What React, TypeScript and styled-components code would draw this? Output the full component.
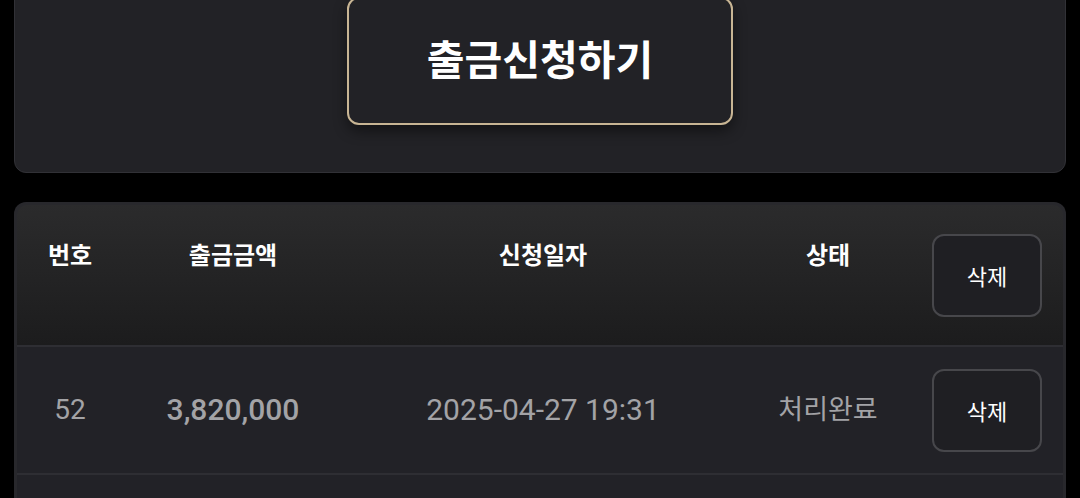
import styled, { createGlobalStyle } from 'styled-components';

const GlobalStyle = createGlobalStyle`
	html, body {
		margin: 0;
		padding: 0;
		background: #000;
		overflow: hidden;
	}
	* {
		box-sizing: border-box;
	}
`;

const FONT = `'Roboto', 'Noto Sans CJK KR', sans-serif`;
const KR_FONT = `'Noto Sans CJK KR', 'Roboto', sans-serif`;

const Page = styled.div`
	display: flex;
	flex-direction: column;
	gap: 29px;
	padding: 0 14px;
	font-family: ${FONT};
`;

const RequestCard = styled.div`
	margin-top: -30px;
	display: flex;
	justify-content: center;
	padding: 26px 0 47px;
	background: #222226;
	border: 1px solid #313136;
	border-radius: 12px;
`;

const RequestButton = styled.button`
	width: 386px;
	height: 128px;
	padding: 0 0 8px;
	background: #222226;
	border: 2px solid #c8b594;
	border-radius: 12px;
	box-shadow: 0 6px 14px rgba(0, 0, 0, 0.45);
	color: #fff;
	font-family: ${KR_FONT};
	font-size: 41px;
	font-weight: 700;
	cursor: pointer;
`;

const TableCard = styled.div`
	display: flex;
	flex-direction: column;
	padding: 3px 3px 0;
	background: #28282c;
	border-radius: 12px 12px 0 0;
`;

const COLUMNS = '106px 220px 400px 170px 148px';

const HeaderRow = styled.div`
	display: grid;
	grid-template-columns: ${COLUMNS};
	height: 142px;
	align-items: center;
	background: linear-gradient(180deg, #2b2b2c 0%, #1c1c1d 100%);
	border-radius: 10px 10px 0 0;
	border-bottom: 2px solid #2e2e33;
`;

const HeaderCell = styled.div`
	align-self: start;
	margin-top: 34px;
	text-align: center;
	color: #fff;
	font-family: ${KR_FONT};
	font-size: 24px;
	font-weight: 700;
	line-height: 30px;
`;

const DataRow = styled.div`
	display: grid;
	grid-template-columns: ${COLUMNS};
	height: 128px;
	align-items: center;
	background: #222227;
	border-bottom: 2px solid #2e2e33;
`;

const RowFiller = styled.div`
	height: 60px;
	background: #222227;
`;

const DataCell = styled.div<{ $size: number; $weight?: number }>`
	text-align: center;
	color: #a3a3a6;
	font-size: ${(p) => p.$size}px;
	font-weight: ${(p) => p.$weight ?? 400};
	line-height: 36px;
	white-space: nowrap;
`;

const ActionCell = styled.div`
	display: flex;
	justify-content: center;
	align-items: center;
`;

const DeleteButton = styled.button`
	width: 110px;
	height: 83px;
	background: #1f1f23;
	border: 2px solid #47474b;
	border-radius: 12px;
	color: #fff;
	font-family: ${KR_FONT};
	font-size: 22px;
	font-weight: 400;
	padding: 0;
	cursor: pointer;
`;

type Withdrawal = {
	id: number;
	amount: string;
	date: string;
	status: string;
};

const rows: Withdrawal[] = [
	{ id: 52, amount: '3,820,000', date: '2025-04-27 19:31', status: '처리완료' },
];

export default function App() {
	return (
		<>
			<GlobalStyle />
			<Page>
				<RequestCard>
					<RequestButton>출금신청하기</RequestButton>
				</RequestCard>

				<TableCard>
					<HeaderRow>
						<HeaderCell>번호</HeaderCell>
						<HeaderCell>출금금액</HeaderCell>
						<HeaderCell>신청일자</HeaderCell>
						<HeaderCell>상태</HeaderCell>
						<ActionCell>
							<DeleteButton>삭제</DeleteButton>
						</ActionCell>
					</HeaderRow>
					{rows.map((row) => (
						<DataRow key={row.id}>
							<DataCell $size={28}>{row.id}</DataCell>
							<DataCell $size={30} $weight={500}>
								{row.amount}
							</DataCell>
							<DataCell $size={30}>{row.date}</DataCell>
							<DataCell $size={27}>{row.status}</DataCell>
							<ActionCell>
								<DeleteButton>삭제</DeleteButton>
							</ActionCell>
						</DataRow>
					))}
					<RowFiller />
				</TableCard>
			</Page>
		</>
	);
}
